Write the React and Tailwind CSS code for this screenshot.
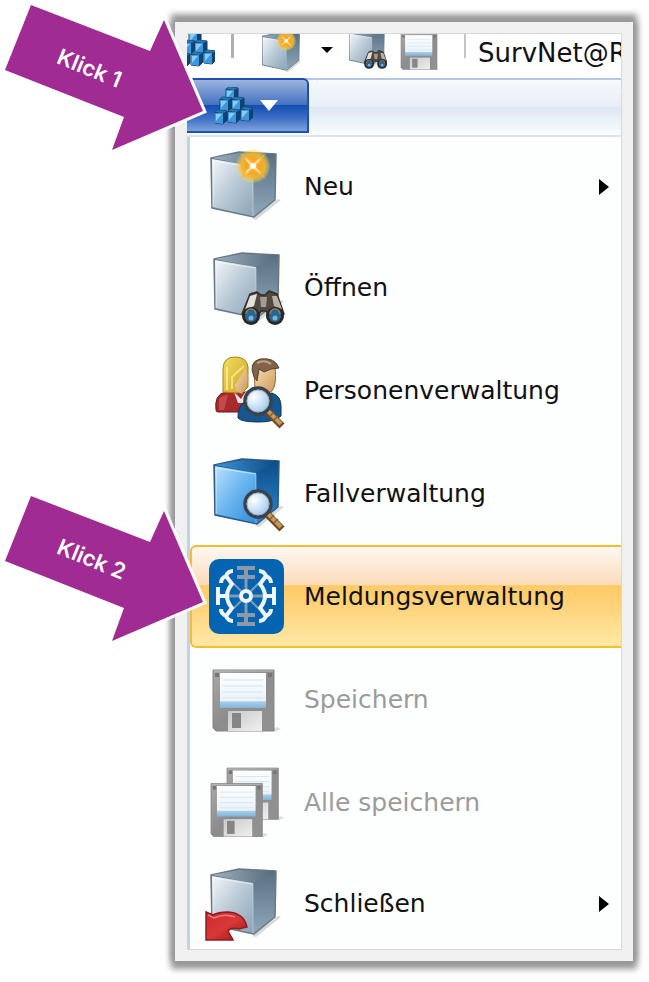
import clsx from "clsx"

function Gradients() {
    return (
        <svg className="absolute h-0 w-0" aria-hidden="true">
            <defs>
                <linearGradient id="steelFront" x1="0" y1="0" x2="1" y2="1">
                    <stop offset="0" stopColor="#f3f7fa" />
                    <stop offset="0.5" stopColor="#b9c9d6" />
                    <stop offset="1" stopColor="#8ba4b6" />
                </linearGradient>
                <linearGradient id="steelSide" x1="0" y1="0" x2="0" y2="1">
                    <stop offset="0" stopColor="#576f80" />
                    <stop offset="1" stopColor="#8fa8ba" />
                </linearGradient>
                <linearGradient id="steelTop" x1="0" y1="0" x2="1" y2="0">
                    <stop offset="0" stopColor="#9db0be" />
                    <stop offset="1" stopColor="#54697a" />
                </linearGradient>
                <linearGradient id="blueFront" x1="0" y1="0" x2="1" y2="1">
                    <stop offset="0" stopColor="#b9e2fc" />
                    <stop offset="0.5" stopColor="#69b5ef" />
                    <stop offset="1" stopColor="#2f8cdc" />
                </linearGradient>
                <linearGradient id="blueSide" x1="0" y1="0" x2="0" y2="1">
                    <stop offset="0" stopColor="#0c4c86" />
                    <stop offset="1" stopColor="#2b86d2" />
                </linearGradient>
                <linearGradient id="blueTop" x1="0" y1="0" x2="1" y2="0">
                    <stop offset="0" stopColor="#3c93d8" />
                    <stop offset="1" stopColor="#0d4a80" />
                </linearGradient>
                <radialGradient id="starGlow">
                    <stop offset="0" stopColor="#ffd27a" />
                    <stop offset="0.35" stopColor="#fba31d" />
                    <stop offset="0.7" stopColor="#f8b72f" stopOpacity="0.9" />
                    <stop offset="1" stopColor="#f5e04a" stopOpacity="0.15" />
                </radialGradient>
                <linearGradient id="label" x1="0" y1="0" x2="0" y2="1">
                    <stop offset="0" stopColor="#ffffff" />
                    <stop offset="0.8" stopColor="#eaf4fb" />
                    <stop offset="0.82" stopColor="#a9cfea" />
                    <stop offset="1" stopColor="#82b4d8" />
                </linearGradient>
                <linearGradient id="disk" x1="0" y1="0" x2="1" y2="1">
                    <stop offset="0" stopColor="#a8a8a8" />
                    <stop offset="0.5" stopColor="#8c8c8c" />
                    <stop offset="1" stopColor="#929292" />
                </linearGradient>
                <linearGradient id="shutter" x1="0" y1="0" x2="1" y2="1">
                    <stop offset="0" stopColor="#c9c9cb" />
                    <stop offset="1" stopColor="#f0f0f1" />
                </linearGradient>
                <radialGradient id="lens" cx="0.35" cy="0.35" r="0.75">
                    <stop offset="0" stopColor="#ffffff" />
                    <stop offset="0.55" stopColor="#c4dff5" />
                    <stop offset="1" stopColor="#8dbde6" />
                </radialGradient>
                <linearGradient id="redArrow" x1="0" y1="0" x2="1" y2="1">
                    <stop offset="0" stopColor="#ce2a2a" />
                    <stop offset="0.5" stopColor="#d93838" />
                    <stop offset="1" stopColor="#9c1216" />
                </linearGradient>
                <linearGradient id="hair" x1="0" y1="0" x2="1" y2="1">
                    <stop offset="0" stopColor="#f3df62" />
                    <stop offset="1" stopColor="#cda021" />
                </linearGradient>
                <linearGradient id="skin" x1="0" y1="0" x2="1" y2="1">
                    <stop offset="0" stopColor="#f9dfb0" />
                    <stop offset="1" stopColor="#c8955a" />
                </linearGradient>
            </defs>
        </svg>
    )
}

function Icon({ children, viewBox = "0 0 84 84", className = "size-[84px]" }) {
    return (
        <svg viewBox={viewBox} className={clsx("shrink-0", className)} aria-hidden="true">
            {children}
        </svg>
    )
}

function Cube({ blue }) {
    const tone = blue ? "blue" : "steel"
    return (
        <g strokeLinejoin="round">
            <path d="M48 74 74 54 77 55 52 75Z" fill="#000" opacity="0.15" />
            <path d="M7 13 35 7 72 9 71 55 50 72 8 63Z" fill={`url(#${tone}Side)`} stroke={blue ? "#2c5a85" : "#6b7883"} strokeWidth="1.5" />
            <path d="M8 13 35 8 71 9 49 21Z" fill={`url(#${tone}Top)`} />
            <path d="M8 14 49 21 49 71 9 62Z" fill={`url(#${tone}Front)`} />
            <path d="M9 62V16L49 22" fill="none" stroke="#fff" strokeWidth="1" opacity="0.6" />
            <path d="M49 22V71" fill="none" stroke="#dbe9f3" strokeWidth="1" opacity="0.5" />
        </g>
    )
}

function Star() {
    return (
        <g>
            <circle cx="49" cy="21" r="17" fill="url(#starGlow)" />
            <path d="M36 8 49 17 62 8 53 21 62 34 49 25 36 34 45 21Z" fill="#fbb42c" opacity="0.8" />
            <path d="M42 14 56 28M56 14 42 28" stroke="#ffe0a0" strokeWidth="2" />
            <circle cx="49" cy="21" r="3" fill="#fff" />
        </g>
    )
}

function Binoculars() {
    return (
        <g strokeLinejoin="round">
            <path d="M46 48 53 46 57 49H61L65 45 73 48 80 68 67 74 62 65H57L51 74 38 68Z" fill="#504a43" stroke="#302b27" strokeWidth="1.5" />
            <path d="M46 50 53 48 50 60 41 64Z" fill="#e5e1da" />
            <path d="M68 50 73 50 78 63 70 60Z" fill="#b8b0a5" />
            <path d="M56 51H63L62 61H57Z" fill="#a49c91" />
            <circle cx="47" cy="70" r="9" fill="#2b2724" />
            <circle cx="71" cy="70" r="9" fill="#2b2724" />
            <circle cx="47" cy="70" r="6" fill="#2b6690" />
            <circle cx="71" cy="70" r="6" fill="#2b6690" />
            <path d="M42 68A5 5 0 0 1 52 68M66 68A5 5 0 0 1 76 68" fill="none" stroke="#8a8378" strokeWidth="1.5" />
            <circle cx="47" cy="72" r="2.5" fill="#6fb6dc" />
            <circle cx="71" cy="72" r="2.5" fill="#6fb6dc" />
        </g>
    )
}

function Magnifier() {
    return (
        <g>
            <path d="M63 62 78 77" stroke="#6e4a22" strokeWidth="7" />
            <path d="M64 62 77 75" stroke="#c8975a" strokeWidth="4" />
            <path d="M66 67 70 63M70 71 74 67" stroke="#8a5f30" strokeWidth="1.5" />
            <circle cx="54" cy="52" r="13" fill="url(#lens)" stroke="#39424b" strokeWidth="3.5" />
            <circle cx="54" cy="52" r="11" fill="none" stroke="#9db0c0" strokeWidth="1" />
        </g>
    )
}

function NewShapes() {
    return (
        <>
            <Cube />
            <Star />
        </>
    )
}

function OpenShapes() {
    return (
        <>
            <g transform="translate(3 0)">
                <Cube />
            </g>
            <Binoculars />
        </>
    )
}

function PersonShapes() {
    return (
        <>
            <path d="M12 61Q10 46 21 43L44 43V63H14Q12 63 12 61Z" fill="#a92a2c" stroke="#6f1517" />
            <path d="M15 50Q18 46 24 46L20 61H15Z" fill="#cf5a58" opacity="0.7" />
            <path d="M30 43 37 50 42 42 44 54H34Z" fill="#efe9e6" />
            <path d="M19 43V19Q20 8 31 8 43 8 44 18V38L40 42 33 44Z" fill="url(#hair)" stroke="#a8821e" />
            <path d="M31 36 42 19Q45 31 42 38L38 45 32 42Z" fill="url(#skin)" />
            <path d="M23 41V18M28 40V28L40 17" fill="none" stroke="#fff3a0" strokeWidth="2" opacity="0.7" />
            <path d="M34 69Q33 55 45 50L68 44Q77 47 77 57V67Q70 73 55 73 37 73 34 69Z" fill="#17568f" stroke="#0c355d" />
            <path d="M50 18H71Q73 36 68 42L60 46 51 42Z" fill="url(#skin)" stroke="#92703e" />
            <path d="M50 28Q44 13 56 10 71 8 75 19L67 20 60 23 55 20 53 32Z" fill="#806349" stroke="#574230" />
            <path d="M53 14Q61 10 67 15" fill="none" stroke="#bda489" strokeWidth="2" />
            <Magnifier />
        </>
    )
}

function CaseShapes() {
    return (
        <>
            <g transform="translate(3 0)">
                <Cube blue />
            </g>
            <Magnifier />
        </>
    )
}

function ReportShapes() {
    return (
        <>
            <rect x="5" y="4" width="75" height="75" rx="10" fill="#0564b1" />
            <g transform="translate(42 41)" fill="none">
                <g stroke="#8499b5" strokeWidth="4">
                    <path d="M-9-28H9M-9-19H9M0-28V-19M-9 28H9M-9 19H9M0 28V19" stroke="#8d99a6" />
                    <path d="M0-17V-7M0 17V7M-17 0H-7M17 0H7" strokeWidth="3" />
                    <path d="M-12-12-5-5M12-12 5-5M-12 12-5 5M12 12 5 5" strokeWidth="2" />
                </g>
                <g stroke="#eef4fb" strokeWidth="4">
                    <circle r="5" />
                    {[1, -1].map((side) => (
                        <g key={side} transform={`scale(${side} 1)`}>
                            <path d="M-28-9V9M-28 0H-19" />
                            <path d="M-20-20-14-12Q-24 0-14 12L-20 20" />
                            <path d="M-13-25Q-18-25-20-20-25-18-25-13M-13 25Q-18 25-20 20-25 18-25 13" />
                        </g>
                    ))}
                </g>
            </g>
        </>
    )
}

function DiskShapes() {
    return (
        <>
            <path d="M66 72 73 69 77 71 71 74Z" fill="#000" opacity="0.12" />
            <path d="M9 12H70V73H12L9 70Z" fill="url(#disk)" stroke="#858585" />
            <path d="M10 13H69" stroke="#bcbcbc" />
            <path d="M11 15H15V19H11ZM64 15H68V19H64Z" fill="#767676" />
            <rect x="16" y="15" width="46" height="35" fill="url(#label)" />
            <path d="M19 22H59M19 28H59M19 34H59M19 40H59" stroke="#cfe4f3" />
            <rect x="24" y="53" width="34" height="20" fill="url(#shutter)" />
            <rect x="28" y="55" width="9" height="15" fill="#858585" />
        </>
    )
}

function AllDisksShapes() {
    return (
        <>
            <g transform="translate(15.5 -3) scale(0.84)">
                <DiskShapes />
            </g>
            <g transform="translate(-0.5 12) scale(0.84 0.87)">
                <DiskShapes />
            </g>
        </>
    )
}

function CloseShapes() {
    return (
        <>
            <Cube />
            <path
                d="M2 50 9 53Q14 50 24 50 40 51 43 65L35 67Q27 65 24 69L29 78H2Z"
                fill="url(#redArrow)"
                stroke="#8e1c1f"
                strokeWidth="1.5"
            />
            <path d="M4 53 10 56Q20 51 31 55" fill="none" stroke="#ef7c7c" strokeWidth="1.5" />
        </>
    )
}

const PILE = [
    [16, 6],
    [10, 16],
    [22, 16],
    [31, 26],
    [5, 29],
    [18, 28],
]

function PileShapes() {
    return PILE.map(([x, y]) => (
        <g key={`${x}-${y}`} transform={`translate(${x} ${y})`} strokeLinejoin="round">
            <path d="M-5-4-2-6 7-5V4L3 8-5 7Z" fill="#0d4477" stroke="#123f69" />
            <path d="M-5-4-2-6 7-5 3-3Z" fill="#2a76b0" />
            <path d="M-5-3 3-3V8L-5 7Z" fill="#3d97da" />
            <path d="M-4-2H2L-4 5Z" fill="#8acbf6" />
        </g>
    ))
}

const ITEMS = [
    { label: "Neu", shapes: NewShapes, submenu: true, row: "h-[99px]" },
    { label: "Öffnen", shapes: OpenShapes },
    { label: "Personenverwaltung", shapes: PersonShapes },
    { label: "Fallverwaltung", shapes: CaseShapes },
    { label: "Meldungsverwaltung", shapes: ReportShapes, active: true },
    { label: "Speichern", shapes: DiskShapes, disabled: true },
    { label: "Alle speichern", shapes: AllDisksShapes, disabled: true },
    { label: "Schließen", shapes: CloseShapes, submenu: true, row: "h-[95px] pt-1" },
]

function MenuItem({ item }) {
    const Shapes = item.shapes
    return (
        <li>
            <button
                type="button"
                disabled={item.disabled}
                className={clsx(
                    "flex w-full items-center gap-4 border-y-2 border-l-2 pr-3 pl-3 text-left text-[25px] whitespace-nowrap",
                    item.row || "h-[103px]",
                    item.active
                        ? "rounded-l-md border-[#f8bd2c] bg-[linear-gradient(to_bottom,#fef8f1_0%,#fbdcbb_38%,#fecb65_39%,#fed37b_60%,#ffe9a6_100%)]"
                        : "border-transparent",
                    item.disabled ? "text-[#9b9b9b]" : "text-[#111111]"
                )}
            >
                <Icon>
                    <Shapes />
                </Icon>
                <span className="flex-1">{item.label}</span>
                {item.submenu && (
                    <svg viewBox="0 0 10 16" className="h-4 w-[10px] shrink-0" aria-hidden="true">
                        <path d="M0 0 10 8 0 16Z" fill="#000" />
                    </svg>
                )}
            </button>
        </li>
    )
}

function Toolbar() {
    return (
        <div className="flex h-11 items-start overflow-hidden bg-white">
            <button type="button" aria-label="SurvNet">
                <Icon viewBox="9 4 28 33" className="h-[33px] w-7">
                    <PileShapes />
                </Icon>
            </button>
            <span className="ml-4 h-6 w-[3px] shrink-0 bg-[#b0b0b0]" />
            <button type="button" aria-label="Neu" className="ml-7">
                <Icon viewBox="7 9 66 66" className="size-[38px]">
                    <NewShapes />
                </Icon>
            </button>
            <button type="button" aria-label="Weitere Vorlagen" className="mt-[13px] ml-[21px]">
                <svg viewBox="0 0 12 6" className="h-[6px] w-3" aria-hidden="true">
                    <path d="M0 0H12L6 6Z" fill="#000" />
                </svg>
            </button>
            <button type="button" aria-label="Öffnen" className="ml-4">
                <Icon viewBox="10 15 70 66" className="h-9 w-[38px]">
                    <OpenShapes />
                </Icon>
            </button>
            <button type="button" aria-label="Speichern" className="ml-[13px]">
                <Icon viewBox="8 13 63 61" className="h-9 w-[38px]">
                    <DiskShapes />
                </Icon>
            </button>
            <span className="ml-[26px] h-6 w-[2px] shrink-0 bg-[#c4c4c4]" />
            <h1 className="ml-3 text-[26px] leading-[38px] whitespace-nowrap text-[#111111]">SurvNet@R</h1>
        </div>
    )
}

function Arrow({ label, className }) {
    return (
        <div className={clsx("absolute left-0 h-[156px] w-[210px]", className)}>
            <svg viewBox="0 0 210 156" className="h-full w-full" aria-hidden="true">
                <path
                    d="M31 5 150 51 164 20 203 111 112 150 124 117 5 70Z"
                    fill="#9f2b93"
                    stroke="#fff"
                    strokeWidth="6"
                    style={{ paintOrder: "stroke" }}
                />
            </svg>
            <span className="absolute top-[54px] left-[56px] rotate-[22deg] font-['Inter',sans-serif] text-[22px] leading-7 font-semibold whitespace-nowrap text-white">
                {label}
            </span>
        </div>
    )
}

export default function App() {
    return (
        <main className="relative bg-white pt-[22px] pr-4 pb-[21px] pl-[175px] font-['DejaVu_Sans','Liberation_Sans',sans-serif]">
            <Gradients />
            <section className="bg-[#f0f0f0] p-[11px] pl-3 shadow-[0_-4px_6px_4px_#999999,0_4px_6px_4px_#999999]">
                <div className="overflow-hidden border border-l-0 border-[#d5d9dc] bg-[#fdfefe]">
                    <Toolbar />
                    <div className="h-[59px] border-y-2 border-t-[#b5c8e2] border-b-[#dbe5f1] bg-[linear-gradient(to_bottom,#f6f9fd_0%,#e8eef7_48%,#dde8f3_50%,#fafcfe_100%)]">
                        <button
                            type="button"
                            aria-label="Anwendungsmenü"
                            className="-mt-[2px] flex h-[55px] w-[122px] items-center rounded-tr-md border-2 border-l-0 border-[#1f50ae] bg-[linear-gradient(to_bottom,#9db5de_0%,#6e91cf_25%,#4672c0_48%,#124eb2_50%,#3d6fc6_75%,#7fa2dc_100%)] pl-7"
                        >
                            <Icon viewBox="0 0 38 38" className="size-[38px]">
                                <PileShapes />
                            </Icon>
                            <svg viewBox="0 0 18 11" className="ml-[7px] h-[11px] w-[18px]" aria-hidden="true">
                                <path d="M0 0H18L9 11Z" fill="#fff" />
                            </svg>
                        </button>
                    </div>
                    <ul className="border-l-[3px] border-[#bdd2f0]">
                        {ITEMS.map((item) => (
                            <MenuItem key={item.label} item={item} />
                        ))}
                    </ul>
                </div>
            </section>
            <Arrow label="Klick 1" className="top-0" />
            <Arrow label="Klick 2" className="top-[491px]" />
        </main>
    )
}
